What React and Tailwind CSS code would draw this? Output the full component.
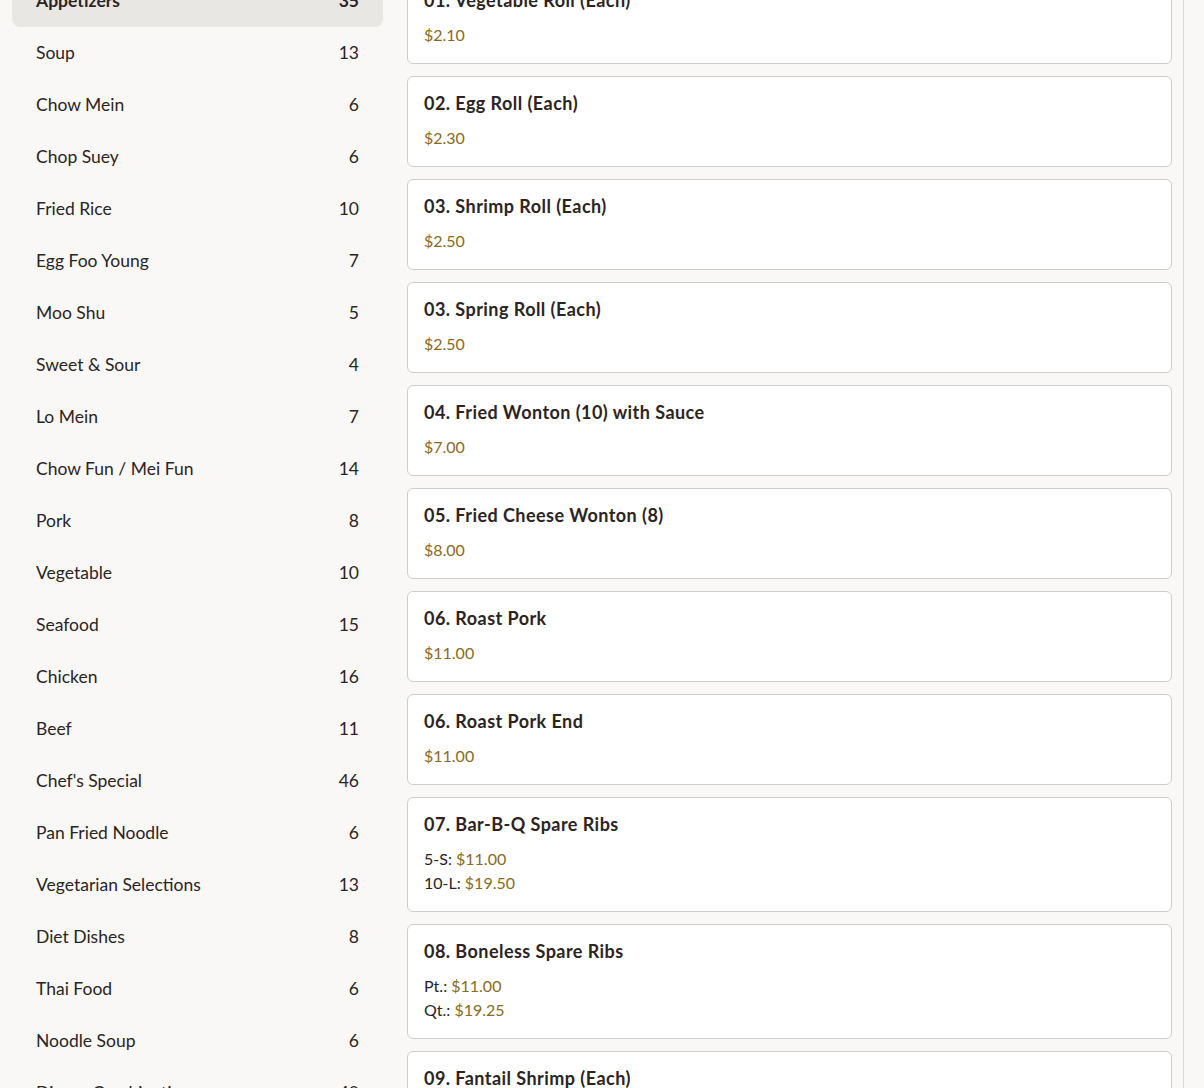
import React from 'react';

const categories = [
  { name: 'Appetizers', count: 35, active: true },
  { name: 'Soup', count: 13 },
  { name: 'Chow Mein', count: 6 },
  { name: 'Chop Suey', count: 6 },
  { name: 'Fried Rice', count: 10 },
  { name: 'Egg Foo Young', count: 7 },
  { name: 'Moo Shu', count: 5 },
  { name: 'Sweet & Sour', count: 4 },
  { name: 'Lo Mein', count: 7 },
  { name: 'Chow Fun / Mei Fun', count: 14 },
  { name: 'Pork', count: 8 },
  { name: 'Vegetable', count: 10 },
  { name: 'Seafood', count: 15 },
  { name: 'Chicken', count: 16 },
  { name: 'Beef', count: 11 },
  { name: "Chef's Special", count: 46 },
  { name: 'Pan Fried Noodle', count: 6 },
  { name: 'Vegetarian Selections', count: 13 },
  { name: 'Diet Dishes', count: 8 },
  { name: 'Thai Food', count: 6 },
  { name: 'Noodle Soup', count: 6 },
  { name: 'Dinner Combination', count: 40 },
];

const items = [
  { name: '01. Vegetable Roll (Each)', prices: [{ price: '$2.10' }] },
  { name: '02. Egg Roll (Each)', prices: [{ price: '$2.30' }] },
  { name: '03. Shrimp Roll (Each)', prices: [{ price: '$2.50' }] },
  { name: '03. Spring Roll (Each)', prices: [{ price: '$2.50' }] },
  { name: '04. Fried Wonton (10) with Sauce', prices: [{ price: '$7.00' }] },
  { name: '05. Fried Cheese Wonton (8)', prices: [{ price: '$8.00' }] },
  { name: '06. Roast Pork', prices: [{ price: '$11.00' }] },
  { name: '06. Roast Pork End', prices: [{ price: '$11.00' }] },
  {
    name: '07. Bar-B-Q Spare Ribs',
    prices: [
      { label: '5-S', price: '$11.00' },
      { label: '10-L', price: '$19.50' },
    ],
  },
  {
    name: '08. Boneless Spare Ribs',
    prices: [
      { label: 'Pt.', price: '$11.00' },
      { label: 'Qt.', price: '$19.25' },
    ],
  },
  { name: '09. Fantail Shrimp (Each)', prices: [{ price: '$2.50' }] },
];

export default function App() {
  return (
    <div
      className="h-[1088px] overflow-hidden bg-[#f9f8f6] text-[#2b2422]"
      style={{ fontFamily: 'Lato, "Noto Sans", sans-serif' }}
    >
      <div className="flex h-full">
        <div className="flex flex-1 gap-6 pl-3 pr-[11px] -mt-[27px]">
          {/* Sidebar */}
          <aside className="w-[371px] shrink-0 pt-[2px]">
            {categories.map((cat) => (
              <div
                key={cat.name}
                className={`flex h-[52px] items-center justify-between rounded-lg px-6 text-[17.5px] ${
                  cat.active ? 'bg-[#e8e7e4] font-bold' : ''
                }`}
              >
                <span>{cat.name}</span>
                <span>{cat.count}</span>
              </div>
            ))}
          </aside>

          {/* Menu items */}
          <main className="flex flex-1 flex-col gap-3">
            {items.map((item) => (
              <div
                key={item.name}
                className="rounded-md border border-[#cfcdca] bg-white px-4 pt-[13px] pb-4"
              >
                <h3 className="text-[18px] font-bold leading-[27px] tracking-[0.025em]">
                  {item.name}
                </h3>
                <div className="mt-[9px] text-[16px] leading-6">
                  {item.prices.map((p, i) => (
                    <div key={i}>
                      {p.label && <span className="text-[#2b2422]">{p.label}: </span>}
                      <span className="text-[#8a6a22]">{p.price}</span>
                    </div>
                  ))}
                </div>
              </div>
            ))}
          </main>
        </div>
        <div className="w-[21px] shrink-0 border-l border-[#dddbd8] bg-[#f9f8f6]" />
      </div>
    </div>
  );
}
